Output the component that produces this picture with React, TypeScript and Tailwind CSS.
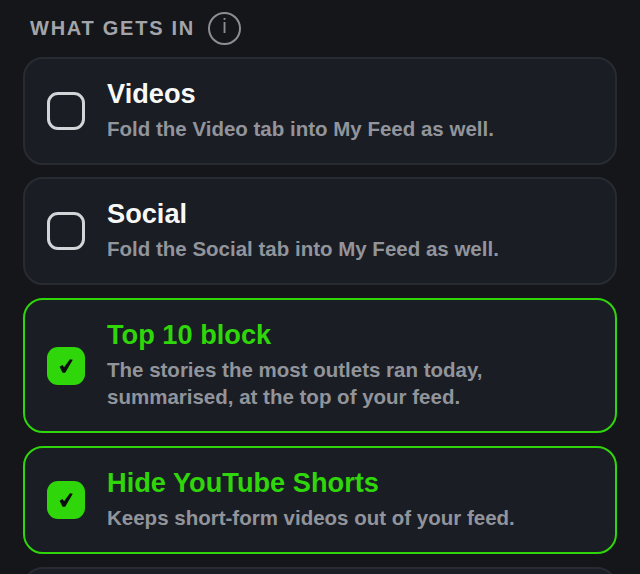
const options = [
  { title: "Videos", description: "Fold the Video tab into My Feed as well.", checked: false },
  { title: "Social", description: "Fold the Social tab into My Feed as well.", checked: false },
  {
    title: "Top 10 block",
    description: "The stories the most outlets ran today, summarised, at the top of your feed.",
    checked: true,
  },
  { title: "Hide YouTube Shorts", description: "Keeps short-form videos out of your feed.", checked: true },
];

const App = () => {
  return (
    <div className="h-screen overflow-hidden bg-[#15161a] px-[23px] font-['Liberation_Sans',Arial,sans-serif]">
      <div className="flex h-[56.5px] items-center gap-[13px] pl-[7px]">
        <h2 className="pb-[1px] text-[20px] font-bold tracking-[1.75px] text-[#a3a5aa]">WHAT GETS IN</h2>
        <div className="flex h-[33px] w-[33px] items-center justify-center rounded-full border-2 border-[#8c8e93] pb-[5px] text-[20px] leading-none text-[#8c8e93]">
          i
        </div>
      </div>
      <div className="flex flex-col gap-[12.9px]">
        {options.map((option) => (
          <div
            key={option.title}
            className={`flex items-center gap-[22px] rounded-[20px] border-2 bg-[#1a1d24] pl-[22px] pr-[24px] pt-[18px] pb-[21px] ${
              option.checked ? "border-[#2fd60a]" : "border-[#282b32]"
            }`}
          >
            {option.checked ? (
              <div className="relative top-[1.5px] flex h-[38px] w-[38px] shrink-0 items-center justify-center rounded-[11px] bg-[#2fd60a]">
                <svg width="14" height="14" viewBox="0 0 14 14" fill="#0b0d0f">
                  <path d="M0.6 7.8 L3.6 6 L5.1 8.3 L10.9 0.2 L13.8 0.8 L6.2 13.8 L3.6 13.8 Z" />
                </svg>
              </div>
            ) : (
              <div className="relative top-[1.5px] h-[38px] w-[38px] shrink-0 rounded-[11px] border-[3px] border-[#d2d4d8]" />
            )}
            <div className="min-w-0 flex-1">
              <h3
                className={`text-[27.2px] font-bold leading-[33px] ${option.checked ? "text-[#2fd60a]" : "text-[#f8f8f6]"}`}
              >
                {option.title}
              </h3>
              <p className="mt-[5px] text-[20.5px] font-bold leading-[27px] text-[#92949b]">{option.description}</p>
            </div>
          </div>
        ))}
        <div className="h-[108px] rounded-[20px] border-2 border-[#282b32] bg-[#1a1d24]" />
      </div>
    </div>
  );
};

export default App;
